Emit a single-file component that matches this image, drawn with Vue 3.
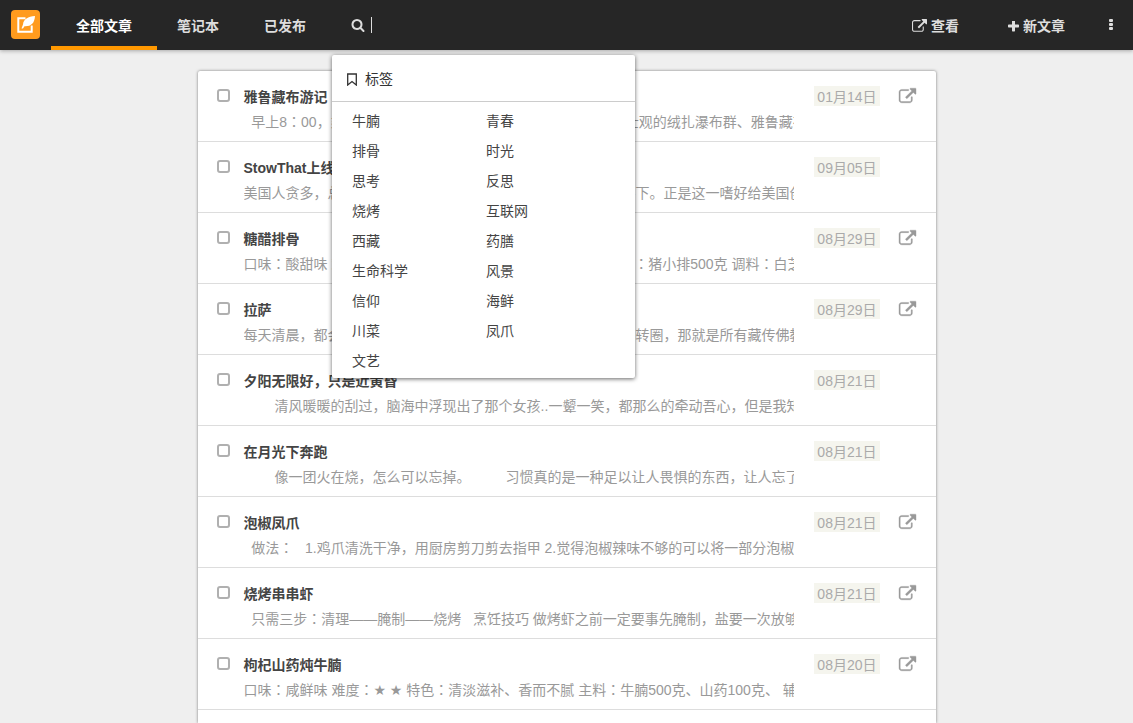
<script setup>
import { ref } from 'vue'

const icons = {
  external:
    'M1408 928v320q0 119-84.5 203.5t-203.5 84.5h-832q-119 0-203.5-84.5t-84.5-203.5v-832q0-119 84.5-203.5t203.5-84.5h704q14 0 23 9t9 23v64q0 14-9 23t-23 9h-704q-66 0-113 47t-47 113v832q0 66 47 113t113 47h832q66 0 113-47t47-113v-320q0-14 9-23t23-9h64q14 0 23 9t9 23zm384-864v512q0 26-19 45t-45 19-45-19l-176-176-652 652q-10 10-23 10t-23-10l-114-114q-10-10-10-23t10-23l652-652-176-176q-19-19-19-45t19-45 45-19h512q26 0 45 19t19 45z',
  plus:
    'M1600 736v192q0 40-28 68t-68 28h-416v416q0 40-28 68t-68 28h-192q-40 0-68-28t-28-68v-416h-416q-40 0-68-28t-28-68v-192q0-40 28-68t68-28h416v-416q0-40 28-68t68-28h192q40 0 68 28t28 68v416h416q40 0 68 28t28 68z',
  search:
    'M1216 832q0-185-131.5-316.5t-316.5-131.5-316.5 131.5-131.5 316.5 131.5 316.5 316.5 131.5 316.5-131.5 131.5-316.5zm512 832q0 52-38 90t-90 38q-54 0-90-38l-343-342q-179 124-399 124-143 0-273.5-55.5t-225-150-150-225-55.5-273.5 55.5-273.5 150-225 225-150 273.5-55.5 273.5 55.5 225 150 150 225 55.5 273.5q0 220-124 399l343 343q37 37 37 90z',
}

const tabs = ['全部文章', '笔记本', '已发布']
const active = ref('全部文章')
const query = ref('')

const tags = [
  '牛腩', '青春', '排骨', '时光', '思考', '反思', '烧烤', '互联网', '西藏', '药膳',
  '生命科学', '风景', '信仰', '海鲜', '川菜', '凤爪', '文艺',
]

// Colons and stars are set in their own families, so the text is split around them.
const split = (text) => text.split(/([：★])/).filter(Boolean)
const kind = (part) => ({ '：': 'colon', '★': 'star' })[part]

const articles = ref([
  { title: '雅鲁藏布游记', text: '  早上8：00，乘车沿江而行前往大峡谷，沿途可以欣赏到非常壮观的绒扎瀑布群、雅鲁藏布江', date: '01月14日', link: true },
  { title: 'StowThat上线了', text: '美国人贪多，总是喜欢把各种各样的东西都买回家里直到堆放不下。正是这一嗜好给美国创造', date: '09月05日', link: false },
  { title: '糖醋排骨', text: '口味：酸甜味 难度：★ ★ 特色：酸甜可口、色泽红亮诱人 主料：猪小排500克 调料：白芝麻', date: '08月29日', link: true },
  { title: '拉萨', text: '每天清晨，都会有许多虔诚的人们手持转经筒沿着八廓街一圈圈转圈，那就是所有藏传佛教徒', date: '08月29日', link: true },
  { title: '夕阳无限好，只是近黄昏', text: '        清风暖暖的刮过，脑海中浮现出了那个女孩..一颦一笑，都那么的牵动吾心，但是我知道', date: '08月21日', link: false },
  { title: '在月光下奔跑', text: '        像一团火在烧，怎么可以忘掉。         习惯真的是一种足以让人畏惧的东西，让人忘了', date: '08月21日', link: false },
  { title: '泡椒凤爪', text: '  做法：   1.鸡爪清洗干净，用厨房剪刀剪去指甲 2.觉得泡椒辣味不够的可以将一部分泡椒', date: '08月21日', link: true },
  { title: '烧烤串串虾', text: '  只需三步：清理——腌制——烧烤   烹饪技巧 做烤虾之前一定要事先腌制，盐要一次放够', date: '08月21日', link: true },
  { title: '枸杞山药炖牛腩', text: '口味：咸鲜味 难度：★ ★ 特色：清淡滋补、香而不腻 主料：牛腩500克、山药100克、 辅料', date: '08月20日', link: true },
].map((a) => ({ ...a, checked: false })))
</script>

<template>
  <div class="page">
    <header class="bar">
      <a class="logo" href="#" aria-label="首页">
        <svg viewBox="0 0 29 29" width="29" height="29" aria-hidden="true">
          <rect width="29" height="29" rx="4" fill="#ff9b1e" />
          <path d="M14.500 8.300H7.300V21.700H20.700V15.500" fill="none" stroke="#fff" stroke-width="2" />
          <path d="M24 6C17 6.500 12.500 9 12 14.500L10.500 18.500L12 18.600L13.500 16.200C20 16.500 23.500 13.500 24 6Z" fill="#fff" />
        </svg>
      </a>
      <nav class="tabs">
        <a
          v-for="tab in tabs"
          :key="tab"
          href="#"
          class="tab"
          :class="{ active: tab === active }"
          @click.prevent="active = tab"
        >{{ tab }}</a>
      </nav>
      <div class="search">
        <label class="search-label" for="query" aria-label="搜索">
          <svg class="icon" viewBox="0 0 1792 1792" width="14" height="14" aria-hidden="true"><path :d="icons.search" /></svg>
        </label>
        <input id="query" v-model="query" class="query" type="text" autocomplete="off">
        <section class="menu">
          <h2 class="menu-title">
            <svg viewBox="0 0 10 13" width="10" height="13" aria-hidden="true">
              <path d="M0.700 1H9.300V12L5 8.500L0.700 12Z" fill="none" stroke="#333" stroke-width="1.300" />
            </svg>
            标签
          </h2>
          <ul class="tags">
            <li v-for="tag in tags" :key="tag"><a href="#">{{ tag }}</a></li>
          </ul>
        </section>
      </div>
      <div class="actions">
        <a class="action" href="#">
          <svg class="icon" viewBox="0 0 1792 1792" width="15" height="15" aria-hidden="true"><path :d="icons.external" /></svg>
          查看
        </a>
        <button class="action" type="button">
          <svg class="icon" viewBox="192 192 1408 1408" width="11" height="11" aria-hidden="true"><path :d="icons.plus" /></svg>
          新文章
        </button>
        <button class="action more" type="button" aria-label="更多">
          <svg class="icon" viewBox="0 0 4 12" width="4" height="12" aria-hidden="true">
            <rect width="4" height="3" rx="1" /><rect y="4" width="4" height="3" rx="1" /><rect y="8" width="4" height="3" rx="1" />
          </svg>
        </button>
      </div>
    </header>

    <main class="list">
      <article v-for="(a, i) in articles" :key="i" class="row">
        <input v-model="a.checked" class="check" type="checkbox" :aria-label="a.title">
        <div class="body">
          <h3 class="title">{{ a.title }}</h3>
          <p class="text"><span v-for="(part, n) in split(a.text)" :key="n" :class="kind(part)">{{ part }}</span></p>
        </div>
        <time class="date">{{ a.date }}</time>
        <a v-if="a.link" class="open" href="#" aria-label="打开文章">
          <svg class="icon" viewBox="0 0 1792 1536" width="17" height="15" aria-hidden="true"><path :d="icons.external" /></svg>
        </a>
      </article>
    </main>
  </div>
</template>

<style>
body {
  margin: 0;
}
</style>

<style scoped>
.page {
  display: flex;
  flex-direction: column;
  height: 100vh;
  overflow: hidden;
  background: #efefef;
  color: #444;
  font: 14px/24px "Liberation Sans", "Noto Sans CJK SC", sans-serif;
  text-spacing-trim: space-all;
}

a {
  color: inherit;
  text-decoration: none;
}

.icon {
  display: block;
  flex: none;
  fill: currentColor;
}

.bar {
  position: relative;
  z-index: 1;
  display: flex;
  flex: none;
  height: 50px;
  background: #262626;
  box-shadow: 0 1px 4px rgba(0, 0, 0, 0.3);
  color: #ddd;
}

.logo {
  margin: 10px 11px 0;
  height: 29px;
}

.logo svg {
  display: block;
}

.tabs {
  display: flex;
}

.tab {
  box-sizing: border-box;
  height: 50px;
  padding: 0 25px 0 20px;
  border-bottom: 4px solid transparent;
  font-weight: bold;
  line-height: 52px;
}

.tab.active {
  padding-left: 25px;
  border-bottom-color: #ff9800;
  color: #fff;
}

.search {
  position: relative;
  display: flex;
  align-items: center;
  padding-left: 20px;
}

.query {
  width: 120px;
  height: 16px;
  margin-left: 6px;
  padding: 0 4px;
  border: 0;
  border-left: 1px solid #ddd;
  outline: 0;
  background: transparent;
  color: #ddd;
  font: inherit;
}

.menu {
  position: absolute;
  top: 55px;
  left: 1px;
  width: 303px;
  border-radius: 2px;
  background: #fff;
  box-shadow: 0 1px 4px rgba(0, 0, 0, 0.6);
  color: #444;
}

.menu-title {
  display: flex;
  align-items: center;
  gap: 8px;
  height: 47px;
  margin: 0;
  padding: 2px 15px 0;
  box-sizing: border-box;
  border-bottom: 1px solid #ccc;
  color: #333;
  font-size: 14px;
  font-weight: normal;
}

.tags {
  display: grid;
  grid-template-columns: 134px 1fr;
  margin: 0;
  padding: 4px 20px 2px;
  list-style: none;
  line-height: 30px;
}

.actions {
  display: flex;
  gap: 49px;
  margin-left: auto;
  padding-right: 20px;
}

.action {
  display: flex;
  align-items: center;
  gap: 4px;
  padding: 2px 0 0;
  border: 0;
  background: none;
  color: #ddd;
  font: bold 14px/24px "Liberation Sans", "Noto Sans CJK SC", sans-serif;
}

.more {
  margin-left: -5px;
  padding: 0;
}

.list {
  display: flex;
  flex: 1 0 auto;
  flex-direction: column;
  width: 100%;
  max-width: 738px;
  margin: 21px auto 0;
  border-radius: 2px 2px 0 0;
  background: #fff;
  box-shadow: 0 0 3px rgba(0, 0, 0, 0.5);
}

.row {
  display: flex;
  align-items: flex-start;
  box-sizing: border-box;
  height: 71px;
  padding: 0 20px 0 19px;
  border-bottom: 1px solid #ddd;
}

.check {
  flex: none;
  width: 13px;
  height: 13px;
  margin: 18px 14px 0 0;
  border: 2px solid #b0b0b0;
  border-radius: 3px;
  background: #fff;
  appearance: none;
}

.check:checked {
  background: #ff9800;
}

.body {
  flex: 1;
  min-width: 0;
  padding-top: 14px;
}

.title {
  margin: 0;
  font-size: 14px;
  line-height: 25px;
}

.text {
  height: 25px;
  margin: 0;
  overflow: hidden;
  color: #999;
  line-height: 25px;
  white-space: pre;
}

.colon,
.star {
  line-height: 1;
}

.colon {
  font-family: "Noto Sans CJK JP", sans-serif;
}

.star {
  font-family: "DejaVu Sans", sans-serif;
}

.date {
  margin: 15px 0 0 20px;
  padding: 2px 3px 0;
  background: #f5f5ee;
  color: #aaa;
  line-height: 18px;
}

.open {
  margin: 17px 0 0 19px;
  color: #999;
}

.open .icon {
  overflow: visible;
  stroke: currentColor;
  stroke-width: 40px;
}

.date:last-child {
  margin-right: 36px;
}
</style>
